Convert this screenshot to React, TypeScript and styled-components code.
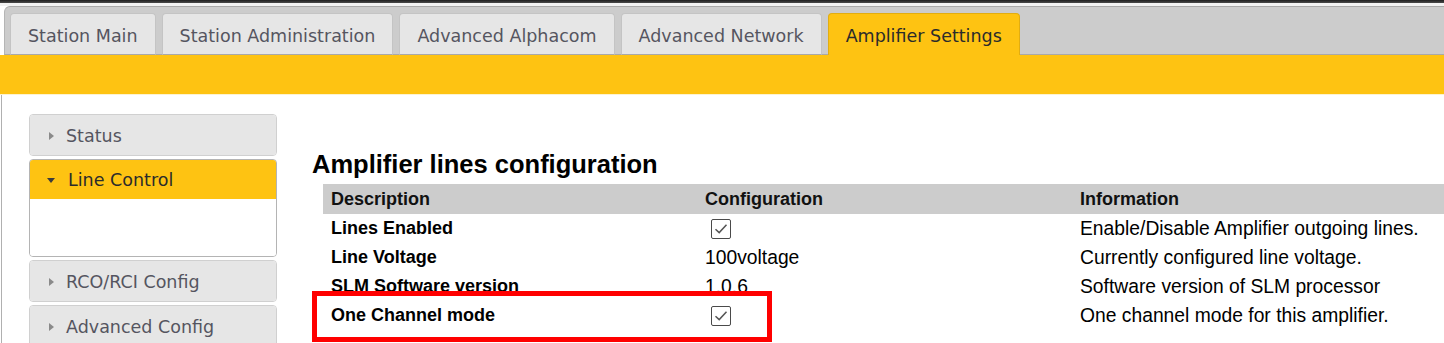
import React from "react";
import styled, { createGlobalStyle } from "styled-components";

const GlobalStyle = createGlobalStyle`
  body {
    margin: 0;
    background: #ffffff;
  }
`;

const tabs = [
  "Station Main",
  "Station Administration",
  "Advanced Alphacom",
  "Advanced Network",
  "Amplifier Settings",
];

const menu = [
  { label: "Status", open: false },
  { label: "Line Control", open: true },
  { label: "RCO/RCI Config", open: false },
  { label: "Advanced Config", open: false },
];

type Row = {
  label: string;
  value: string | null;
  info: string;
};

const rows: Row[] = [
  { label: "Lines Enabled", value: null, info: "Enable/Disable Amplifier outgoing lines." },
  { label: "Line Voltage", value: "100voltage", info: "Currently configured line voltage." },
  { label: "SLM Software version", value: "1.0.6", info: "Software version of SLM processor" },
  { label: "One Channel mode", value: null, info: "One channel mode for this amplifier." },
];

const Page = styled.div`
  width: 1444px;
  height: 343px;
  overflow: hidden;
  position: relative;
  background: #ffffff;
`;

const TopRule = styled.div`
  height: 3px;
  background: linear-gradient(#1e1e1e, #4a4a4a);
  border-bottom: 3px solid #f2f2f2;
`;

const TabStrip = styled.div`
  box-sizing: border-box;
  height: 49px;
  margin-left: 4px;
  padding: 6px 0 0 5px;
  display: flex;
  align-items: flex-end;
  gap: 6px;
  background: #cccccc;
  border-top: 1px solid #a9a9a9;
  border-left: 1px solid #b5b5b5;
  border-bottom: 1px solid #a9a9a9;
  border-top-left-radius: 6px;
`;

const Tab = styled.div<{ $active?: boolean }>`
  box-sizing: border-box;
  height: 42px;
  margin-bottom: -1px;
  padding: 3px 17px 0;
  display: flex;
  align-items: center;
  font-family: "DejaVu Sans", Verdana, sans-serif;
  font-size: 17.5px;
  color: ${(p) => (p.$active ? "#2b2b2b" : "#555560")};
  background: ${(p) => (p.$active ? "#fec312" : "#e6e6e6")};
  border: 1px solid ${(p) => (p.$active ? "#e2ad10" : "#c4c4c4")};
  border-bottom: ${(p) => (p.$active ? "none" : "1px solid #a9a9a9")};
  border-radius: 4px 4px 0 0;
`;

const Band = styled.div`
  height: 39px;
  background: #fec312;
  border-bottom: 1px solid #fdf3d0;
`;

const Body = styled.div`
  display: flex;
  align-items: flex-start;
  margin-left: 1px;
  padding-top: 19px;
  border-left: 1px solid #b0b0b0;
  height: 300px;
`;

const Sidebar = styled.div`
  width: 248px;
  margin-left: 27px;
  display: flex;
  flex-direction: column;
  gap: 3px;
`;

const Item = styled.div<{ $open?: boolean }>`
  box-sizing: border-box;
  border: 1px solid ${(p) => (p.$open ? "#b4b4b4" : "#d0d0d0")};
  border-radius: 4px;
  background: #ffffff;
  overflow: hidden;
`;

const ItemHead = styled.div<{ $open?: boolean }>`
  height: ${(p) => (p.$open ? 39 : 40)}px;
  display: flex;
  align-items: center;
  gap: 8px;
  padding-left: 17px;
  padding-top: 1px;
  box-sizing: border-box;
  font-family: "DejaVu Sans", Verdana, sans-serif;
  font-size: 17.5px;
  color: ${(p) => (p.$open ? "#2b2b2b" : "#555560")};
  background: ${(p) => (p.$open ? "#fec312" : "#e6e6e6")};
`;

const ItemPanel = styled.div`
  height: 57px;
  background: #ffffff;
`;

const Arrow = styled.span<{ $open?: boolean }>`
  width: 0;
  height: 0;
  margin-right: 5px;
  ${(p) =>
    p.$open
      ? `border-left: 4px solid transparent;
         border-right: 4px solid transparent;
         border-top: 5px solid #3c3c3c;`
      : `border-top: 4px solid transparent;
         border-bottom: 4px solid transparent;
         border-left: 5px solid #8a8a8a;
         margin-left: 2px;
         margin-right: 4px;`}
`;

const Content = styled.div`
  margin-left: 35px;
  flex: 1;
  position: relative;
`;

const Title = styled.h2`
  margin: 35px 0 5px 0;
  font-family: "Liberation Sans", Arial, sans-serif;
  font-weight: bold;
  font-size: 25.5px;
  line-height: 30px;
  color: #000000;
`;

const Table = styled.div`
  margin-left: 11px;
  display: grid;
  grid-template-columns: 374px 375px 1fr;
  font-family: "Liberation Sans", Arial, sans-serif;
  color: #000000;
`;

const HeadCell = styled.div`
  height: 30px;
  display: flex;
  align-items: center;
  padding-left: 8px;
  background: #cccccc;
  font-weight: bold;
  font-size: 18px;
  color: #111111;
`;

const Cell = styled.div<{ $bold?: boolean }>`
  height: 29px;
  display: flex;
  align-items: center;
  padding-left: 8px;
  font-weight: ${(p) => (p.$bold ? "bold" : "normal")};
  font-size: ${(p) => (p.$bold ? 18 : 19.3)}px;
`;

const Check = styled.span`
  box-sizing: border-box;
  width: 20px;
  height: 20px;
  margin-left: 6px;
  border: 1.5px solid #4a4a4a;
  border-radius: 2px;
  display: flex;
  align-items: center;
  justify-content: center;
  background: #ffffff;
`;

const Highlight = styled.div`
  position: absolute;
  left: 0;
  top: 177px;
  width: 460px;
  height: 51px;
  box-sizing: border-box;
  border: 5px solid #ff0000;
  pointer-events: none;
`;

const CheckMark = () => (
  <Check>
    <svg width="14" height="12" viewBox="0 0 14 12">
      <path d="M1.5 6.2 L5.2 9.6 L12.5 1.8" fill="none" stroke="#555" strokeWidth="1.5" />
    </svg>
  </Check>
);

export default function App() {
  return (
    <Page>
      <GlobalStyle />
      <TopRule />
      <TabStrip>
        {tabs.map((t) => (
          <Tab key={t} $active={t === "Amplifier Settings"}>
            {t}
          </Tab>
        ))}
      </TabStrip>
      <Band />
      <Body>
        <Sidebar>
          {menu.map((m) => (
            <Item key={m.label} $open={m.open}>
              <ItemHead $open={m.open}>
                <Arrow $open={m.open} />
                {m.label}
              </ItemHead>
              {m.open && <ItemPanel />}
            </Item>
          ))}
        </Sidebar>
        <Content>
          <Title>Amplifier lines configuration</Title>
          <Table>
            <HeadCell>Description</HeadCell>
            <HeadCell>Configuration</HeadCell>
            <HeadCell>Information</HeadCell>
            {rows.map((r) => (
              <React.Fragment key={r.label}>
                <Cell $bold>{r.label}</Cell>
                <Cell>{r.value === null ? <CheckMark /> : r.value}</Cell>
                <Cell>{r.info}</Cell>
              </React.Fragment>
            ))}
          </Table>
          <Highlight />
        </Content>
      </Body>
    </Page>
  );
}
